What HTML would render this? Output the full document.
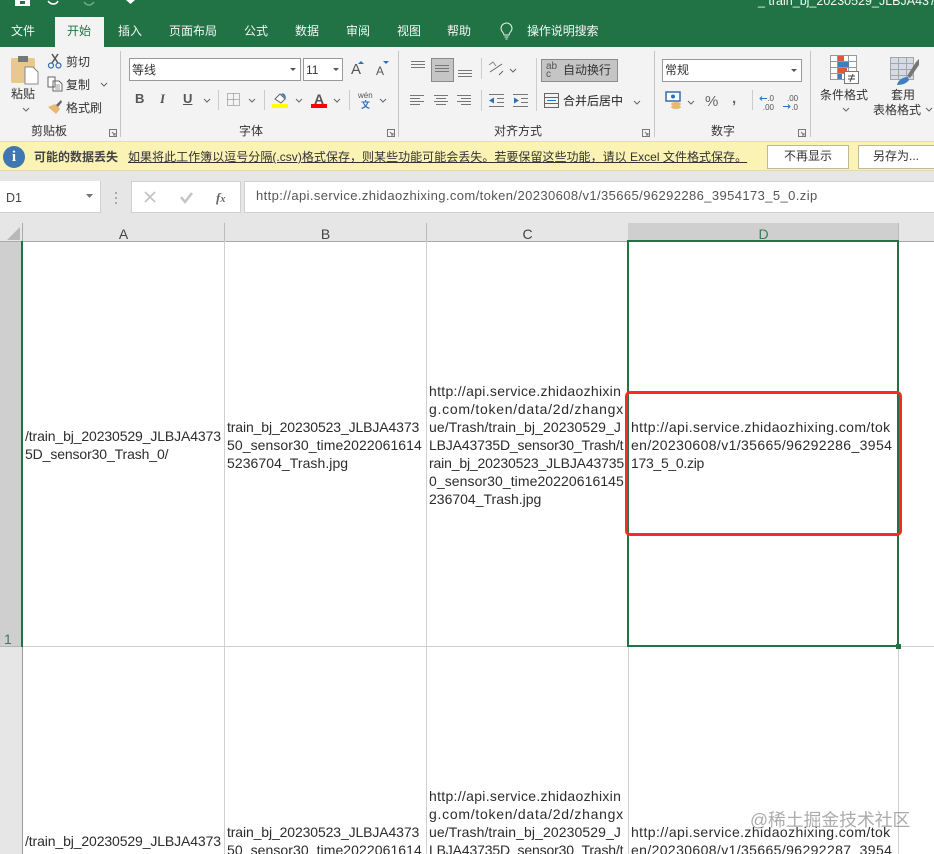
<!DOCTYPE html>
<html><head><meta charset="utf-8">
<style>
html,body{margin:0;padding:0;background:#fff}
#p{position:relative;width:934px;height:854px;overflow:hidden;background:#fff;font-family:"Liberation Sans","Noto Sans CJK SC",sans-serif;color:#333}
#p div,#p span.t{position:absolute}
.t{white-space:nowrap;font-size:12px;line-height:16px}
.w{color:#f2f7f4}
.c{font-size:14px;line-height:18px;color:#2c2c2c;white-space:nowrap;letter-spacing:-.12px}
.c b{display:block;font-weight:normal}
.h{font-size:14px;line-height:18px;color:#444}
svg{position:absolute;overflow:visible}
</style></head><body><div id="p">

<!-- title band -->
<div style="left:0;top:0;width:934px;height:47px;background:#217346"></div>
<div style="left:55px;top:17px;width:49px;height:30px;background:#f3f3f3"></div>
<svg style="left:0;top:0" width="140" height="10"><path d="M15 0h15v6h-15z" fill="#fff"/><path d="M20 1h5v3h-5z" fill="#217346"/><path d="M48 1c3 4 8 4 10 0" fill="none" stroke="#fff" stroke-width="1.5"/><path d="M84 2c3 4 7 4 10 0" fill="none" stroke="#6da78a" stroke-width="1.5"/><path d="M126 0h9l-4.500 4z" fill="#fff"/></svg>
<span class="t w" style="left:758px;top:-7px;font-size:12.500px;letter-spacing:0">_ train_bj_20230529_JLBJA4373</span>

<span class="t w" style="left:11px;top:23px">文件</span>
<span class="t" style="left:67px;top:23px;color:#217346">开始</span>
<span class="t w" style="left:118px;top:23px">插入</span>
<span class="t w" style="left:169px;top:23px">页面布局</span>
<span class="t w" style="left:244px;top:23px">公式</span>
<span class="t w" style="left:295px;top:23px">数据</span>
<span class="t w" style="left:346px;top:23px">审阅</span>
<span class="t w" style="left:397px;top:23px">视图</span>
<span class="t w" style="left:447px;top:23px">帮助</span>
<svg style="left:499px;top:23px" width="16" height="18"><path d="M5 12c0-2.500-3-3.500-3-6.500a5.500 5.500 0 0 1 11 0c0 3-3 4-3 6.500zM5.500 14h4M6.500 16h2" fill="none" stroke="#e9f2ed" stroke-width="1"/></svg>
<span class="t w" style="left:527px;top:23px;letter-spacing:-.1px">操作说明搜索</span>

<!-- ribbon -->
<div style="left:0;top:47px;width:934px;height:94px;background:#f3f3f3"></div>
<div style="left:120px;top:51px;width:1px;height:86px;background:#c6c6c6"></div>
<div style="left:398px;top:51px;width:1px;height:86px;background:#c6c6c6"></div>
<div style="left:654px;top:51px;width:1px;height:86px;background:#c6c6c6"></div>
<div style="left:810px;top:51px;width:1px;height:86px;background:#c6c6c6"></div>

<!-- clipboard -->
<svg style="left:10px;top:54px" width="30" height="32"><rect x="1" y="4" width="24" height="25" rx="2" fill="#e9c88e"/><rect x="8" y="2" width="10" height="6" fill="#777"/><path d="M15 13h8l5 5v12H15z" fill="#fff" stroke="#888"/></svg>
<span class="t" style="left:11px;top:86px">粘贴</span>
<svg style="left:22px;top:107px" width="8" height="5"><path d="M1 1l3 3 3-3" fill="none" stroke="#666"/></svg>
<svg style="left:47px;top:53px" width="16" height="16"><path d="M5 1l6 9M11 1L5 10" stroke="#555" stroke-width="1.500"/><circle cx="4" cy="12.500" r="2.500" fill="none" stroke="#2f6fb5" stroke-width="1.200"/><circle cx="11.500" cy="12.500" r="2.500" fill="none" stroke="#2f6fb5" stroke-width="1.200"/></svg>
<span class="t" style="left:66px;top:54px">剪切</span>
<svg style="left:47px;top:76px" width="16" height="16"><path d="M1 1h7v10H1zM6 5h6l3 3v7H6z" fill="#fff" stroke="#666"/><path d="M8 9h5M8 11h5M8 13h5" stroke="#999"/></svg>
<span class="t" style="left:66px;top:77px">复制</span>
<svg style="left:100px;top:82px" width="8" height="5"><path d="M1 1l3 3 3-3" fill="none" stroke="#666"/></svg>
<svg style="left:47px;top:99px" width="16" height="16"><path d="M1 8l7-3 5 5-4 5z" fill="#e7b970"/><path d="M9 6l5-5 1 2-4 5z" fill="#666"/></svg>
<span class="t" style="left:66px;top:100px">格式刷</span>
<span class="t" style="left:31px;top:123px">剪贴板</span>

<!-- font -->
<div style="left:129px;top:58px;width:170px;height:21px;background:#fff;border:1px solid #999"></div>
<span class="t" style="left:132px;top:62px">等线</span>
<svg style="left:290px;top:68px" width="6" height="4"><path d="M0 0h6L3 3z" fill="#555"/></svg>
<div style="left:303px;top:58px;width:38px;height:21px;background:#fff;border:1px solid #999"></div>
<span class="t" style="left:306px;top:62px">11</span>
<svg style="left:333px;top:68px" width="6" height="4"><path d="M0 0h6L3 3z" fill="#555"/></svg>
<span class="t" style="left:351px;top:62px;font-size:15px;color:#555">A</span>
<svg style="left:358px;top:61px" width="6" height="4"><path d="M0 3h6L3 0z" fill="#2f6fb5"/></svg>
<span class="t" style="left:376px;top:63px;font-size:12px;color:#555">A</span>
<svg style="left:383px;top:61px" width="6" height="4"><path d="M0 0h6L3 3z" fill="#2f6fb5"/></svg>
<span class="t" style="left:135px;top:91px;font-weight:bold;font-size:13px;color:#555">B</span>
<span class="t" style="left:160px;top:91px;font-style:italic;font-family:'Liberation Serif',serif;font-weight:bold;font-size:13px;color:#555">I</span>
<span class="t" style="left:183px;top:91px;font-weight:bold;font-size:13px;color:#555;text-decoration:underline">U</span>
<svg style="left:203px;top:98px" width="8" height="5"><path d="M1 1l3 3 3-3" fill="none" stroke="#666"/></svg>
<div style="left:218px;top:90px;width:1px;height:20px;background:#ccc"></div>
<svg style="left:227px;top:93px" width="13" height="13"><path d="M.5.500h12v12H.500zM6.500.500v12M.5 6.500h12" fill="none" stroke="#777" stroke-dasharray="1 1"/></svg>
<svg style="left:248px;top:98px" width="8" height="5"><path d="M1 1l3 3 3-3" fill="none" stroke="#666"/></svg>
<div style="left:264px;top:90px;width:1px;height:20px;background:#ccc"></div>
<svg style="left:272px;top:91px" width="17" height="18"><path d="M3 8l5-5 5 5-4 4z" fill="#fff" stroke="#666"/><path d="M9 3c3-2 5 1 5 5z" fill="#3f7fc0"/><rect y="13" width="16" height="4" fill="#ffff00"/></svg>
<svg style="left:295px;top:98px" width="8" height="5"><path d="M1 1l3 3 3-3" fill="none" stroke="#666"/></svg>
<span class="t" style="left:314px;top:91px;font-weight:bold;font-size:14px;color:#555">A</span>
<div style="left:311px;top:104px;width:16px;height:4px;background:#f00"></div>
<svg style="left:333px;top:98px" width="8" height="5"><path d="M1 1l3 3 3-3" fill="none" stroke="#666"/></svg>
<div style="left:349px;top:90px;width:1px;height:20px;background:#ccc"></div>
<span class="t" style="left:358px;top:91px;font-size:8px;line-height:10px;color:#555">wén</span>
<span class="t" style="left:361px;top:100px;font-size:9px;line-height:10px;color:#2f6fb5;font-weight:bold">文</span>
<svg style="left:379px;top:98px" width="8" height="5"><path d="M1 1l3 3 3-3" fill="none" stroke="#666"/></svg>
<span class="t" style="left:239px;top:123px">字体</span>

<!-- align -->
<svg style="left:410px;top:61px" width="60" height="20"><path d="M1 .500h14M1 3.500h14M1 6.500h14" stroke="#777" fill="none"/></svg>
<div style="left:431px;top:58px;width:21px;height:22px;background:#c5c5c5;border:1px solid #8a8a8a"></div>
<svg style="left:435px;top:65px" width="14" height="8"><path d="M0 .500h14M0 3.500h14M0 6.500h14" stroke="#777"/></svg>
<svg style="left:458px;top:70px" width="14" height="8"><path d="M0 .500h14M0 3.500h14M0 6.500h14" stroke="#777"/></svg>
<div style="left:481px;top:58px;width:1px;height:21px;background:#ccc"></div>
<svg style="left:488px;top:60px" width="18" height="17"><path d="M2 12L14 4M11 15l4-4" stroke="#666" fill="none"/><path d="M1 5l4-3 3 4" fill="none" stroke="#888"/></svg>
<svg style="left:509px;top:68px" width="8" height="5"><path d="M1 1l3 3 3-3" fill="none" stroke="#666"/></svg>
<svg style="left:410px;top:95px" width="64" height="12"><path d="M0 .500h14M0 3.500h10M0 6.500h14M0 9.500h10M24 .500h14M26 3.500h10M24 6.500h14M26 9.500h10M47 .500h14M51 3.500h10M47 6.500h14M51 9.500h10" stroke="#777"/></svg>
<div style="left:481px;top:90px;width:1px;height:21px;background:#ccc"></div>
<svg style="left:489px;top:94px" width="40" height="13"><path d="M0 .500h15M8 4.500h7M8 8.500h7M0 12.500h15M24 .500h15M32 4.500h7M32 8.500h7M24 12.500h15" stroke="#777"/><path d="M0 6.500l5-3v6z" fill="#2f6fb5"/><path d="M30 6.500l-5-3v6z" fill="#2f6fb5"/></svg>
<div style="left:536px;top:58px;width:1px;height:53px;background:#ccc"></div>
<div style="left:541px;top:59px;width:75px;height:21px;background:#c5c5c5;border:1px solid #8a8a8a"></div>
<span class="t" style="left:546px;top:62px;font-size:10px;line-height:10px;color:#555">ab</span>
<span class="t" style="left:546px;top:70px;font-size:10px;line-height:10px;color:#555">c</span>
<span class="t" style="left:563px;top:62px">自动换行</span>
<svg style="left:544px;top:93px" width="16" height="15"><path d="M.5.500h14v14H.500zM.5 4.500h14M.5 10.500h14" fill="none" stroke="#666"/><path d="M3 7.500h9" stroke="#2f6fb5"/></svg>
<span class="t" style="left:563px;top:93px;color:#222">合并后居中</span>
<svg style="left:633px;top:100px" width="8" height="5"><path d="M1 1l3 3 3-3" fill="none" stroke="#666"/></svg>
<span class="t" style="left:494px;top:123px">对齐方式</span>

<!-- number -->
<div style="left:662px;top:59px;width:138px;height:21px;background:#fff;border:1px solid #999"></div>
<span class="t" style="left:665px;top:62px">常规</span>
<svg style="left:791px;top:69px" width="6" height="4"><path d="M0 0h6L3 3z" fill="#555"/></svg>
<svg style="left:665px;top:91px" width="17" height="18"><rect x="1" y="1" width="14" height="9" fill="#fff" stroke="#2f6fb5" stroke-width="1.500"/><circle cx="8" cy="5.500" r="2" fill="#2f6fb5"/><ellipse cx="11" cy="13" rx="5" ry="2" fill="#e7b970"/><ellipse cx="11" cy="16" rx="5" ry="2" fill="#e7b970"/></svg>
<svg style="left:687px;top:100px" width="8" height="5"><path d="M1 1l3 3 3-3" fill="none" stroke="#666"/></svg>
<span class="t" style="left:705px;top:94px;font-size:15px;color:#666">%</span>
<span class="t" style="left:732px;top:91px;font-size:15px;font-weight:bold;color:#666">,</span>
<div style="left:752px;top:90px;width:1px;height:20px;background:#ccc"></div>
<span class="t" style="left:756px;top:94px;font-size:8px;line-height:9px;color:#555;text-align:right;width:18px">.0<br>.00</span>
<svg style="left:759px;top:96px" width="8" height="5"><path d="M8 2.500H2M3 .500L1 2.500l2 2" fill="none" stroke="#2f6fb5"/></svg>
<span class="t" style="left:787px;top:94px;font-size:8px;line-height:9px;color:#555;text-align:right;width:11px">.00<br>.0</span>
<svg style="left:783px;top:104px" width="8" height="5"><path d="M0 2.500h6M5 .500l2 2-2 2" fill="none" stroke="#2f6fb5"/></svg>
<span class="t" style="left:711px;top:123px">数字</span>

<!-- launchers -->
<svg style="left:0;top:0" width="934" height="140"><g fill="none" stroke="#777"><path d="M109.500 129.500h7v7h-7zM112 132l3 3m0-2v2h-2"/><path d="M387.500 129.500h7v7h-7zM390 132l3 3m0-2v2h-2"/><path d="M642.500 129.500h7v7h-7zM645 132l3 3m0-2v2h-2"/><path d="M798.500 129.500h7v7h-7zM801 132l3 3m0-2v2h-2"/></g></svg>

<!-- styles -->
<svg style="left:830px;top:55px" width="30" height="31"><path d="M.5.500h26v24H.500zM.5 6.500h26M.5 12.500h26M.5 18.500h26M7.500.500v24M18.500.500v24" fill="#fff" stroke="#999"/><rect x="8" y="1" width="6" height="5" fill="#d9593d"/><rect x="8" y="7" width="11" height="5" fill="#3f7fc0"/><rect x="8" y="13" width="9" height="5" fill="#d9593d"/><rect x="8" y="19" width="4" height="5" fill="#3f7fc0"/><rect x="14.500" y="16.500" width="14" height="12" fill="#fff" stroke="#777"/><path d="M18 21h7M18 24h7M23 19l-3 8" stroke="#444"/></svg>
<span class="t" style="left:820px;top:87px">条件格式</span>
<svg style="left:842px;top:107px" width="8" height="5"><path d="M1 1l3 3 3-3" fill="none" stroke="#666"/></svg>
<svg style="left:890px;top:57px" width="30" height="30"><path d="M.5.500h23v22H.500zM.5 6.500h23M.5 12.500h23M.5 18.500h23M8.500.500v22M16.500.500v22" fill="#d4dae6" stroke="#a5a5a5"/><path d="M17 19l9-14 3-3v6l-9 13z" fill="#777"/><path d="M7 28c1-5 6-8 11-8l1 3c-2 3-6 5-12 5z" fill="#3f7fc0"/></svg>
<span class="t" style="left:891px;top:87px">套用</span>
<span class="t" style="left:873px;top:102px">表格格式</span>
<svg style="left:925px;top:107px" width="8" height="5"><path d="M1 1l3 3 3-3" fill="none" stroke="#666"/></svg>

<!-- message bar -->
<div style="left:0;top:141px;width:934px;height:30px;background:#fbf3b4;border-top:1px solid #e4ddb2;border-bottom:1px solid #e2daa8;box-sizing:border-box"></div>
<div style="left:3px;top:146px;width:22px;height:22px;border-radius:50%;background:#3f78b0"></div>
<span class="t" style="left:3px;top:148px;width:22px;text-align:center;color:#fff;font-weight:bold;font-size:15px;line-height:18px;font-family:'Liberation Serif',serif">i</span>
<span class="t" style="left:34px;top:149px;font-weight:bold;font-size:12px;color:#444">可能的数据丢失</span>
<span class="t" style="left:128px;top:149px;font-size:12px;color:#333;text-decoration:underline;letter-spacing:.03px">如果将此工作簿以逗号分隔(.csv)格式保存，则某些功能可能会丢失。若要保留这些功能，请以 Excel 文件格式保存。</span>
<div style="left:767px;top:145px;width:80px;height:22px;background:#fff;border:1px solid #bdb89d"></div>
<span class="t" style="left:767px;top:148px;width:82px;text-align:center">不再显示</span>
<div style="left:858px;top:145px;width:90px;height:22px;background:#fff;border:1px solid #bdb89d"></div>
<span class="t" style="left:873px;top:148px">另存为...</span>

<!-- formula bar -->
<div style="left:0;top:171px;width:934px;height:52px;background:#e6e6e6"></div>
<div style="left:0;top:181px;width:100px;height:31px;background:#fff;border-right:1px solid #d0d0d0;border-bottom:1px solid #d0d0d0"></div>
<span class="t" style="left:6px;top:190px;font-size:12.500px;color:#444">D1</span>
<svg style="left:86px;top:194px" width="8" height="5"><path d="M0 0h7L3.500 4z" fill="#777"/></svg>
<svg style="left:115px;top:192px" width="3" height="14"><path d="M0 0h2v2H0zM0 5h2v2H0zM0 10h2v2H0z" fill="#aaa"/></svg>
<div style="left:131px;top:181px;width:108px;height:30px;background:#fff;border:1px solid #d0d0d0"></div>
<svg style="left:144px;top:191px" width="54" height="14"><path d="M1 1l10 10M11 1L1 11" stroke="#c4c4c4" stroke-width="1.800" fill="none"/><path d="M37 6l4 5 7-9" stroke="#c4c4c4" stroke-width="2.500" fill="none"/></svg>
<span class="t" style="left:216px;top:190px;font-family:'Liberation Serif',serif;font-style:italic;font-weight:bold;font-size:13px;color:#666">f<span style="font-size:10px">x</span></span>
<div style="left:244px;top:181px;width:690px;height:30px;background:#fff;border:1px solid #d0d0d0;border-right:0"></div>
<span class="t" style="left:256px;top:188px;font-size:13px;color:#555;letter-spacing:.4px">http://api.service.zhidaozhixing.com/token/20230608/v1/35665/96292286_3954173_5_0.zip</span>

<!-- col headers -->
<div style="left:0;top:223px;width:934px;height:18px;background:#e6e6e6;border-bottom:1px solid #aaa;box-sizing:content-box"></div>
<svg style="left:7px;top:227px" width="14" height="13"><path d="M13 0v13H0z" fill="#b8b8b8"/></svg>
<div style="left:628px;top:223px;width:271px;height:18px;background:#cfcfcf"></div>
<div style="left:22px;top:223px;width:1px;height:18px;background:#aaa"></div>
<div style="left:224px;top:223px;width:1px;height:18px;background:#bbb"></div>
<div style="left:426px;top:223px;width:1px;height:18px;background:#bbb"></div>
<div style="left:898px;top:223px;width:1px;height:18px;background:#bbb"></div>
<span class="t h" style="left:23px;top:225px;width:201px;text-align:center">A</span>
<span class="t h" style="left:225px;top:225px;width:201px;text-align:center">B</span>
<span class="t h" style="left:427px;top:225px;width:201px;text-align:center">C</span>
<span class="t h" style="left:628px;top:225px;width:271px;text-align:center;color:#3e7a5c">D</span>

<!-- row header -->
<div style="left:0;top:242px;width:22px;height:404px;background:#cfcfcf"></div>
<div style="left:0;top:647px;width:22px;height:207px;background:#e6e6e6"></div>
<div style="left:0;top:646px;width:22px;height:1px;background:#b5b5b5"></div>
<div style="left:22px;top:647px;width:1px;height:207px;background:#999"></div>
<div style="left:21px;top:241px;width:2px;height:406px;background:#217346"></div>
<span class="t h" style="left:4px;top:630px;color:#3e7a5c">1</span>

<!-- gridlines -->
<div style="left:23px;top:646px;width:911px;height:1px;background:#d0d0d0"></div>
<div style="left:224px;top:241px;width:1px;height:613px;background:#d0d0d0"></div>
<div style="left:426px;top:241px;width:1px;height:613px;background:#d0d0d0"></div>
<div style="left:628px;top:647px;width:1px;height:207px;background:#d0d0d0"></div>
<div style="left:898px;top:647px;width:1px;height:207px;background:#d0d0d0"></div>

<!-- row 1 text -->
<div class="c" style="left:25px;top:427px"><b>/train_bj_20230529_JLBJA4373</b><b>5D_sensor30_Trash_0/</b></div>
<div class="c" style="left:227px;top:418px"><b>train_bj_20230523_JLBJA4373</b><b style="letter-spacing:.07px">50_sensor30_time2022061614</b><b style="letter-spacing:.06px">5236704_Trash.jpg</b></div>
<div class="c" style="left:429px;top:382px"><b style="letter-spacing:.3px">http://api.service.zhidaozhixin</b><b style="letter-spacing:.73px">g.com/token/data/2d/zhangx</b><b style="letter-spacing:.09px">ue/Trash/train_bj_20230529_J</b><b style="letter-spacing:-.16px">LBJA43735D_sensor30_Trash/t</b><b style="letter-spacing:-.16px">rain_bj_20230523_JLBJA43735</b><b style="letter-spacing:.07px">0_sensor30_time20220616145</b><b style="letter-spacing:0">236704_Trash.jpg</b></div>
<div class="c" style="left:631px;top:418px"><b style="letter-spacing:.4px">http://api.service.zhidaozhixing.com/tok</b><b style="letter-spacing:.38px">en/20230608/v1/35665/96292286_3954</b><b style="letter-spacing:-.3px">173_5_0.zip</b></div>

<!-- row 2 text -->
<div class="c" style="left:25px;top:832px"><b>/train_bj_20230529_JLBJA4373</b><b>5D_sensor30_Trash_0/</b></div>
<div class="c" style="left:227px;top:823px"><b>train_bj_20230523_JLBJA4373</b><b style="letter-spacing:.07px">50_sensor30_time2022061614</b></div>
<div class="c" style="left:429px;top:787px"><b style="letter-spacing:.3px">http://api.service.zhidaozhixin</b><b style="letter-spacing:.73px">g.com/token/data/2d/zhangx</b><b style="letter-spacing:.09px">ue/Trash/train_bj_20230529_J</b><b style="letter-spacing:-.16px">LBJA43735D_sensor30_Trash/t</b></div>
<div class="c" style="left:631px;top:823px"><b style="letter-spacing:.4px">http://api.service.zhidaozhixing.com/tok</b><b style="letter-spacing:.38px">en/20230608/v1/35665/96292287_3954</b></div>

<!-- selection -->
<div style="left:627px;top:240px;width:272px;height:407px;border:2px solid #217346;box-sizing:border-box"></div>
<div style="left:896px;top:644px;width:5px;height:5px;background:#217346"></div>

<!-- red box -->
<div style="left:625px;top:391px;width:277px;height:145px;border:3.500px solid #f92a20;border-radius:5px;box-sizing:border-box"></div>

<!-- watermark -->
<span class="t" style="left:750px;top:809px;font-size:17.8px;line-height:22px;color:rgba(120,120,120,.62)">@稀土掘金技术社区</span>

</div></body></html>
